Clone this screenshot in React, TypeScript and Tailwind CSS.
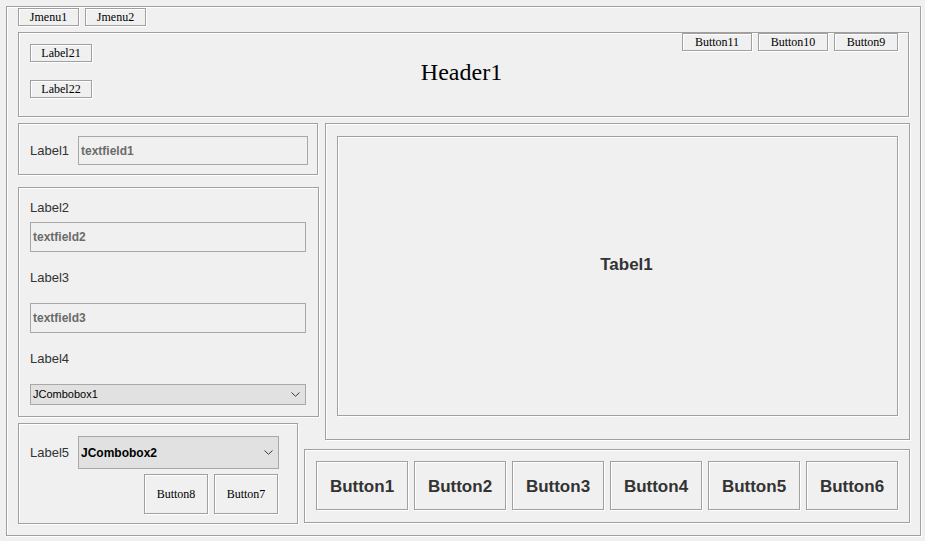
import React from "react";

const etched = "border border-[#a0a0a0] shadow-[inset_1px_1px_0_#fff,1px_1px_0_#fff]";
const serif = "font-['Liberation_Serif','Times_New_Roman',serif]";

function SmallBox({ label, w, h = "h-[18px]" }: { label: string; w: string; h?: string }) {
  return (
    <div className={`${etched} ${w} ${h} ${serif} flex items-center justify-center text-[12px] leading-none text-black`}>
      {label}
    </div>
  );
}

function TextField({ text, w, h }: { text: string; w: string; h: string }) {
  return (
    <div className={`${w} ${h} border border-[#a8a8a8] flex items-center pl-[2px] text-[12px] font-bold text-[#6b6b6b]`}>
      {text}
    </div>
  );
}

function Chevron() {
  return (
    <svg width="9" height="5" viewBox="0 0 9 5" fill="none">
      <path d="M0.5 0.5L4.5 4.3L8.5 0.5" stroke="#3a3a3a" strokeWidth="1" />
    </svg>
  );
}

function Combo({ text, w, h, bold }: { text: string; w: string; h: string; bold?: boolean }) {
  return (
    <div
      className={`${w} ${h} border border-[#a8a8a8] bg-[#e1e1e1] flex items-center justify-between pl-[2px] pr-[5px] text-black ${
        bold ? "text-[12px] font-bold" : "text-[11px]"
      }`}
    >
      <span>{text}</span>
      <Chevron />
    </div>
  );
}

function Label({ text, className = "" }: { text: string; className?: string }) {
  return <div className={`text-[13px] leading-[16px] text-[#333] ${className}`}>{text}</div>;
}

export default function App() {
  return (
    <div className="w-[925px] h-[541px] bg-[#f0f0f0] pt-[6px] pl-[6px] font-['Liberation_Sans',Arial,sans-serif] overflow-hidden">
      <div className={`${etched} w-[915px] h-[530px] pl-[11px] pt-[1px] flex flex-col`}>
        {/* menu bar */}
        <div className="flex gap-[6px]">
          <SmallBox label="Jmenu1" w="w-[61px]" />
          <SmallBox label="Jmenu2" w="w-[61px]" />
        </div>

        {/* header */}
        <div className={`${etched} mt-[6px] w-[891px] h-[85px] grid grid-cols-[1fr_auto_1fr]`}>
          <div className="flex flex-col gap-[18px] pl-[11px] pt-[11px]">
            <SmallBox label="Label21" w="w-[62px]" />
            <SmallBox label="Label22" w="w-[62px]" />
          </div>
          <div className={`${serif} self-center text-[24px] leading-none text-black pb-[5px] pr-[4px]`}>Header1</div>
          <div className="flex justify-end items-start gap-[6px] pr-[10px]">
            <SmallBox label="Button11" w="w-[70px]" />
            <SmallBox label="Button10" w="w-[70px]" />
            <SmallBox label="Button9" w="w-[64px]" />
          </div>
        </div>

        {/* main */}
        <div className="mt-[6px] flex gap-[6px]">
          <div className="w-[301px] flex flex-col">
            <div className={`${etched} w-[300px] h-[52px] pt-[12px] pl-[11px]`}>
              <div className="flex items-center">
                <Label text="Label1" className="w-[48px]" />
                <TextField text="textfield1" w="w-[230px]" h="h-[29px]" />
              </div>
            </div>

            <div className={`${etched} mt-[12px] w-[301px] h-[230px] pt-[12px] pl-[11px] flex flex-col`}>
              <Label text="Label2" />
              <div className="mt-[6px]">
                <TextField text="textfield2" w="w-[276px]" h="h-[30px]" />
              </div>
              <Label text="Label3" className="mt-[18px]" />
              <div className="mt-[17px]">
                <TextField text="textfield3" w="w-[276px]" h="h-[30px]" />
              </div>
              <Label text="Label4" className="mt-[18px]" />
              <div className="mt-[17px]">
                <Combo text="JCombobox1" w="w-[276px]" h="h-[21px]" />
              </div>
            </div>

            <div className={`${etched} mt-[6px] w-[280px] h-[101px] pt-[12px] pl-[11px]`}>
              <div className="w-[249px] flex flex-col">
                <div className="flex items-center">
                  <Label text="Label5" className="w-[48px]" />
                  <Combo text="JCombobox2" w="w-[201px]" h="h-[33px]" bold />
                </div>
                <div className="mt-[5px] flex justify-end gap-[6px] pr-[1px]">
                  <SmallBox label="Button8" w="w-[64px]" h="h-[40px]" />
                  <SmallBox label="Button7" w="w-[64px]" h="h-[40px]" />
                </div>
              </div>
            </div>
          </div>

          <div className="w-[585px] flex flex-col">
            <div className={`${etched} w-[585px] h-[317px] pt-[12px] pl-[11px]`}>
              <div
                className={`${etched} w-[561px] h-[280px] flex items-center justify-center pl-[18px] pb-[23px] text-[17px] font-bold text-[#333]`}
              >
                Tabel1
              </div>
            </div>

            <div className={`${etched} mt-[9px] -ml-[21px] w-[606px] h-[74px] pt-[11px] pl-[11px] flex gap-[6px]`}>
              {["Button1", "Button2", "Button3", "Button4", "Button5", "Button6"].map((b) => (
                <div
                  key={b}
                  className={`${etched} w-[92px] h-[49px] flex items-center justify-center pt-[3px] text-[17px] font-bold text-[#333]`}
                >
                  {b}
                </div>
              ))}
            </div>
          </div>
        </div>
      </div>
    </div>
  );
}
